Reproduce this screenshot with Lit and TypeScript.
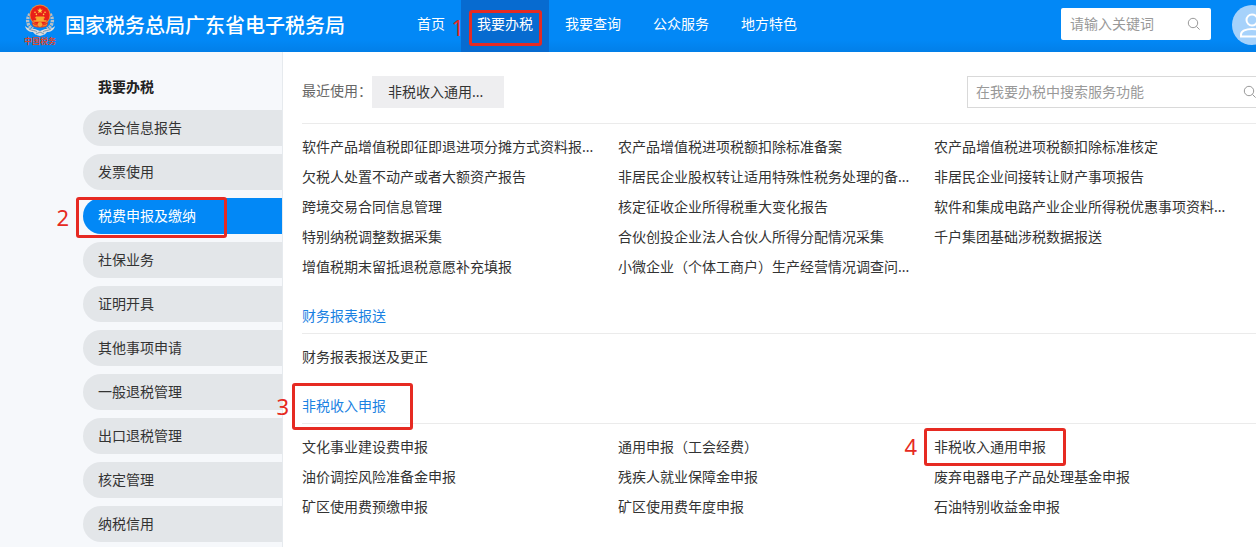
import { LitElement, html, css, svg, nothing } from "lit";
import { customElement, property } from "lit/decorators.js";

const NAV = ["首页", "我要办税", "我要查询", "公众服务", "地方特色"];

const MENU = [
  "综合信息报告", "发票使用", "税费申报及缴纳", "社保业务", "证明开具",
  "其他事项申请", "一般退税管理", "出口退税管理", "核定管理", "纳税信用",
];

interface Section {
  title?: string;
  step?: string;
  items: string[];
}

const SECTIONS: Section[] = [
  {
    items: [
      "软件产品增值税即征即退进项分摊方式资料报...", "农产品增值税进项税额扣除标准备案", "农产品增值税进项税额扣除标准核定",
      "欠税人处置不动产或者大额资产报告", "非居民企业股权转让适用特殊性税务处理的备...", "非居民企业间接转让财产事项报告",
      "跨境交易合同信息管理", "核定征收企业所得税重大变化报告", "软件和集成电路产业企业所得税优惠事项资料...",
      "特别纳税调整数据采集", "合伙创投企业法人合伙人所得分配情况采集", "千户集团基础涉税数据报送",
      "增值税期末留抵退税意愿补充填报", "小微企业（个体工商户）生产经营情况调查问...",
    ],
  },
  { title: "财务报表报送", items: ["财务报表报送及更正"] },
  {
    title: "非税收入申报",
    step: "3",
    items: [
      "文化事业建设费申报", "通用申报（工会经费）", "非税收入通用申报",
      "油价调控风险准备金申报", "残疾人就业保障金申报", "废弃电器电子产品处理基金申报",
      "矿区使用费预缴申报", "矿区使用费年度申报", "石油特别收益金申报",
    ],
  },
];

const searchIcon = html`<svg width="14" height="14" viewBox="0 0 14 14" fill="none" stroke="#999" aria-hidden="true">
  <circle cx="6" cy="6" r="4.7" /><path d="M9.4 9.4 12.6 12.6" />
</svg>`;

/* Numbered red marker drawn over the step it points at. */
@customElement("step-mark")
class StepMark extends LitElement {
  @property() step = "";

  static styles = css`
    :host {
      position: absolute;
      box-sizing: border-box;
      border: 3px solid #e62a22;
      border-radius: 3px;
      pointer-events: none;
    }
    .number {
      position: absolute;
      right: calc(100% + var(--gap, 10px));
      bottom: calc(50% - 11px);
      color: #e62a22;
      font: 22px/24px "Noto Sans", "Open Sans", sans-serif;
    }
  `;

  render() {
    return html`<span class="number">${this.step}</span>`;
  }
}

@customElement("tax-emblem")
class TaxEmblem extends LitElement {
  static styles = css`
    :host { display: block; width: 32px; }
    .art { display: block; }
    .caption {
      display: block;
      color: #d8492f;
      font: bold 8px/8px "Noto Sans CJK SC", sans-serif;
      text-align: center;
      white-space: nowrap;
    }
  `;

  render() {
    return html`
      <svg class="art" width="32" height="33" viewBox="0 0 32 33" aria-hidden="true">
        <path d="M6 10C2 15 3 22 9 25M26 10c4 5 3 12-3 15" fill="none" stroke="#b9bfc4" stroke-width="3.4" stroke-dasharray="2.4 .8" />
        <path d="M1 22c3 3 7 3 10 3l5 2 5-2c3 0 7 0 10-3-1 4-4 6-8 6-1 2-3 3-7 4-4-1-6-2-7-4-4 0-7-2-8-6Z" fill="#d9dcdd" />
        <path d="M5 25c3 2 6 1 8 3M27 25c-3 2-6 1-8 3M12 30l4-2 4 2" fill="none" stroke="#6f8ba3" stroke-width=".9" />
        <circle cx="16" cy="11" r="10.5" fill="#e88a3c" />
        <circle cx="16" cy="11" r="9.6" fill="#e91f18" />
        <path d="m16 3.8.8 2h2.1l-1.7 1.3.6 2.1-1.8-1.3-1.8 1.3.6-2.1-1.7-1.3h2.1Z" fill="#ffdc4c" />
        ${[[11, 8.2], [12.4, 10.4], [19.6, 10.4], [21, 8.2]].map(([x, y]) => svg`<circle cx=${x} cy=${y} r=".8" fill="#ffd044" />`)}
        <path d="M12 12.5h8l1.2 1.7h-1.4v2h2.8v1.6H9.4v-1.6h2.8v-2h-1.4Z" fill="#f8a92d" />
        <path d="M7.5 18c3 2 14 2 17 0l-1.7 4.2c-4 1.8-9.6 1.8-13.6 0Z" fill="#e73b20" />
        <circle cx="16" cy="20.5" r="2.4" fill="#f2a336" />
        <path d="M9 20.5c2 1.4 3 1.4 4.5 1.4M23 20.5c-2 1.4-3 1.4-4.5 1.4" fill="none" stroke="#f2a336" />
      </svg>
      <span class="caption">中国税务</span>
    `;
  }
}

@customElement("site-header")
class SiteHeader extends LitElement {
  static styles = css`
    :host {
      display: flex;
      align-items: center;
      box-sizing: border-box;
      height: 52px;
      padding-left: 24px;
      overflow: hidden;
      background: linear-gradient(#0288f6 0, #0288f6 40px, #027fe8 52px);
      color: #fff;
    }
    .emblem { padding-bottom: 4px; }
    .title {
      margin: 0 56px 0 9px;
      font-size: 20px;
      font-weight: 500;
      line-height: 30px;
      white-space: nowrap;
    }
    .nav { display: flex; flex: 1; }
    .link {
      position: relative;
      padding: 0 16px 4px;
      color: #fff;
      font-size: 14px;
      line-height: 48px;
      text-decoration: none;
      white-space: nowrap;
    }
    .current { background: #076bd0; }
    .mark { inset: 10px 7px 6px 8px; --gap: 8px; }
    .search {
      display: flex;
      align-items: center;
      box-sizing: border-box;
      width: 150px;
      height: 32px;
      margin: 0 21px 4px 16px;
      padding: 0 10px 0 9px;
      border-radius: 2px;
      background: #fff;
    }
    .field {
      flex: 1;
      min-width: 0;
      padding: 0 0 2px;
      border: 0;
      outline: 0;
      background: none;
      font: inherit;
      font-size: 14px;
    }
    .field::placeholder { color: #999; }
    .go, .user { display: block; padding: 0; border: 0; background: none; line-height: 0; }
    .user { flex: none; margin: 0 -16px 2px 0; }
  `;

  render() {
    return html`
      <tax-emblem class="emblem"></tax-emblem>
      <h1 class="title">国家税务总局广东省电子税务局</h1>
      <nav class="nav">
        ${NAV.map((label, i) => html`<a class="link ${i === 1 ? "current" : ""}" href="#">${label}${i === 1
          ? html`<step-mark class="mark" step="1"></step-mark>` : nothing}</a>`)}
      </nav>
      <form class="search">
        <input class="field" type="text" aria-label="请输入关键词" placeholder="请输入关键词" />
        <button class="go" type="button" aria-label="搜索">${searchIcon}</button>
      </form>
      <button class="user" type="button" aria-label="用户">
        <svg width="40" height="40" viewBox="0 0 40 40" aria-hidden="true">
          <circle cx="20" cy="20" r="20" fill="#a6d2fb" />
          <g fill="none" stroke="#fff" stroke-width="2">
            <circle cx="20" cy="15" r="5.5" />
            <path d="M9 31.5v-2c0-3.5 5-5.5 11-5.5s11 2 11 5.5v2Z" />
          </g>
        </svg>
      </button>
    `;
  }
}

@customElement("side-menu")
class SideMenu extends LitElement {
  static styles = css`
    :host {
      display: block;
      box-sizing: border-box;
      width: 283px;
      padding: 20px 0 5px 83px;
      border-right: 1px solid #e6eaee;
      background: #f6f8fb;
    }
    .heading {
      margin: 0 0 8px 15px;
      font-size: 14px;
      font-weight: 700;
      line-height: 30px;
      color: #222;
    }
    .list { display: grid; gap: 8px; margin: 0; padding: 0; list-style: none; }
    .item {
      position: relative;
      display: block;
      padding-left: 15px;
      border-radius: 18px 0 0 18px;
      background: #e3e6e9;
      color: #333;
      font-size: 14px;
      line-height: 36px;
      text-decoration: none;
    }
    .active { background: #0288f6; color: #fff; }
    .mark { inset: -1px 55px -4px -7px; }
  `;

  render() {
    return html`
      <h2 class="heading">我要办税</h2>
      <ul class="list">
        ${MENU.map((label, i) => html`<li><a class="item ${i === 2 ? "active" : ""}" href="#">${label}${i === 2
          ? html`<step-mark class="mark" step="2"></step-mark>` : nothing}</a></li>`)}
      </ul>
    `;
  }
}

@customElement("app-root")
class AppRoot extends LitElement {
  static styles = css`
    :host {
      display: block;
      overflow: hidden;
      background: #fff;
      color: #333;
      font-family: "Noto Sans", "Noto Sans CJK SC", sans-serif;
      font-size: 14px;
    }
    .body {
      display: grid;
      grid-template-columns: auto minmax(0, 1fr);
      min-height: calc(100vh - 52px);
    }
    .main { padding: 24px 0 24px 19px; }
    .recent {
      display: flex;
      align-items: center;
      padding-bottom: 15px;
      border-bottom: 1px solid #ebebeb;
    }
    .label { padding-bottom: 2px; color: #666; line-height: 30px; }
    .chip {
      height: 32px;
      padding: 0 21px 2px 16px;
      border: 0;
      background: #eeeef0;
      color: #333;
      font: inherit;
    }
    .search {
      display: flex;
      align-items: center;
      box-sizing: border-box;
      width: 300px;
      height: 32px;
      margin: 0 -11px 0 auto;
      padding: 0 9px 0 8px;
      border: 1px solid #d9d9d9;
    }
    .field {
      flex: 1;
      min-width: 0;
      padding: 0 0 2px;
      border: 0;
      outline: 0;
      background: none;
      font: inherit;
    }
    .field::placeholder { color: #999; }
    .go { padding: 0; border: 0; background: none; line-height: 0; }
    .head {
      padding: 19px 0 2px;
      border-bottom: 1px solid #ebebeb;
    }
    .title {
      position: relative;
      display: inline-block;
      margin: 0;
      color: #1a82e2;
      font-size: 14px;
      font-weight: 400;
      line-height: 30px;
      vertical-align: top;
    }
    .grid {
      display: grid;
      grid-template-columns: repeat(3, minmax(0, 1fr));
      margin: 0 6px 0 0;
      padding: 8px 0 0;
      list-style: none;
    }
    .link {
      position: relative;
      display: inline-block;
      color: #333;
      line-height: 30px;
      text-decoration: none;
      vertical-align: top;
      white-space: nowrap;
    }
    .title-mark { inset: -8px -27px -9px -10px; --gap: 6px; }
    .link-mark { inset: -4px -20px -4px -10px; }
  `;

  private section({ title, step, items }: Section) {
    return html`
      <section>
        ${title ? html`<div class="head"><h2 class="title">${title}${step
          ? html`<step-mark class="title-mark" step=${step}></step-mark>` : nothing}</h2></div>` : nothing}
        <ul class="grid">
          ${items.map((item) => html`<li><a class="link" href="#">${item}${item === "非税收入通用申报"
            ? html`<step-mark class="link-mark" step="4"></step-mark>` : nothing}</a></li>`)}
        </ul>
      </section>
    `;
  }

  render() {
    return html`
      <site-header></site-header>
      <div class="body">
        <side-menu></side-menu>
        <main class="main">
          <div class="recent">
            <span class="label">最近使用：</span>
            <button class="chip" type="button">非税收入通用...</button>
            <form class="search">
              <input class="field" type="text" aria-label="在我要办税中搜索服务功能" placeholder="在我要办税中搜索服务功能" />
              <button class="go" type="button" aria-label="搜索">${searchIcon}</button>
            </form>
          </div>
          ${SECTIONS.map((s) => this.section(s))}
        </main>
      </div>
    `;
  }
}
